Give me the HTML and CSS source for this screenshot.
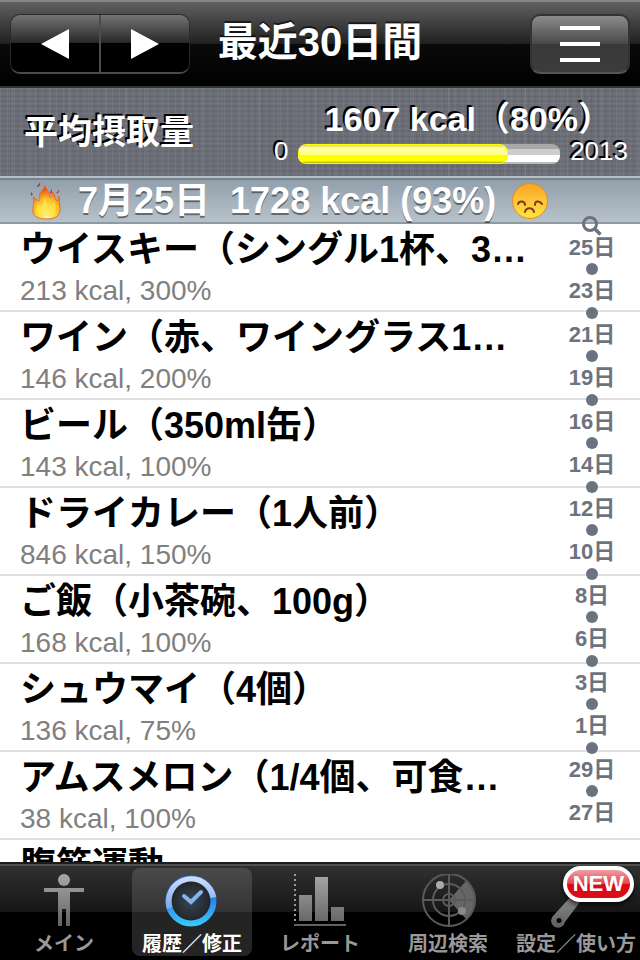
FILE: index.html
```html
<!DOCTYPE html>
<html lang="ja">
<head>
    <meta charset="UTF-8">
    <meta name="viewport" content="width=device-width, initial-scale=1.0">
    <title>最近30日間</title>
    <link rel="stylesheet" href="styles.css">
</head>
<body>
    <header class="top-bar">
        <div class="pager">
            <button class="pager-btn" type="button" aria-label="前へ">
                <svg width="28" height="30" viewBox="0 0 28 30"><path d="M28 0V30L0 15Z" fill="#fff"/></svg>
            </button>
            <button class="pager-btn" type="button" aria-label="次へ">
                <svg width="28" height="30" viewBox="0 0 28 30"><path d="M0 0V30L28 15Z" fill="#fff"/></svg>
            </button>
        </div>
        <h1 class="title">最近30日間</h1>
        <button class="menu-btn" type="button" aria-label="メニュー">
            <svg width="40" height="36" viewBox="0 0 40 36"><path d="M0 2H40M0 18H40M0 34H40" stroke="#fff" stroke-width="4"/></svg>
        </button>
    </header>

    <section class="summary">
        <h2 class="summary-label">平均摂取量</h2>
        <div class="gauge">
            <div class="gauge-value">1607 kcal（80%）</div>
            <span class="gauge-limit">0</span>
            <div class="gauge-track"><div class="gauge-fill" style="width: 80%"></div></div>
            <span class="gauge-limit">2013</span>
        </div>
    </section>

    <main class="content">
        <div class="day-header">
            <svg class="day-icon" width="36" height="40" viewBox="0 0 36 40">
                <defs>
                    <radialGradient id="flame" cx="50%" cy="88%" r="75%">
                        <stop offset="0" stop-color="#fffbd0"/>
                        <stop offset=".3" stop-color="#ffe64a"/>
                        <stop offset=".68" stop-color="#fcb322"/>
                        <stop offset="1" stop-color="#e2571c"/>
                    </radialGradient>
                </defs>
                <path d="M17 4C18 8 21 10 22 16C23 17 24 15 25 11C28 15 26 18 29 20C30 19 31 17 31 15C32 19 31 22 32 26C33 34 28 38 19 38C9 38 4 35 5 27C5 23 7 22 5 16C8 17 9 20 11 20C13 16 10 13 13 11C14 9 16 8 17 4Z" fill="url(#flame)" stroke="#e8702a"/>
                <path d="M17 16C18 21 20 24 22 25C25 23 25 22 26 20C28 25 29 31 26 35H12C7 31 8 27 10 23C12 25 13 25 14 24C15 22 16 19 17 16Z" fill="#ffe545" opacity=".65"/>
                <path d="M12 1C13 4 11 6 9 6C9 4 11 4 12 1ZM23 8C25 10 24 13 22 13C22 11 23 10 23 8ZM31 8C32 11 30 13 28 12C29 11 31 10 31 8ZM3 11C5 12 5 14 4 15C2 14 3 13 3 11Z" fill="#d22c25"/>
            </svg>
            <h2 class="day-text">7月25日  1728 kcal (93%)</h2>
            <svg class="day-icon" width="40" height="40" viewBox="0 0 40 40">
                <defs>
                    <linearGradient id="face" x1="0" y1="0" x2="0" y2="1">
                        <stop offset="0" stop-color="#fba31f"/>
                        <stop offset=".5" stop-color="#fdc53a"/>
                        <stop offset="1" stop-color="#ffe63c"/>
                    </linearGradient>
                </defs>
                <circle cx="20" cy="20" r="17.5" fill="url(#face)" stroke="#e68a25"/>
                <path d="M8 23Q9 20 12 20.500T15 24M25 24Q25 20 28 20.500T32 23M15 31C16 26 23 26 24 31" fill="none" stroke="#7d3d17" stroke-width="2" stroke-linecap="round"/>
            </svg>
        </div>

        <ul class="food-list">
            <li class="food-item">
                <div class="food-name">ウイスキー（シングル1杯、3…</div>
                <div class="food-detail">213 kcal, 300%</div>
            </li>
            <li class="food-item">
                <div class="food-name">ワイン（赤、ワイングラス1…</div>
                <div class="food-detail">146 kcal, 200%</div>
            </li>
            <li class="food-item">
                <div class="food-name">ビール（350ml缶）</div>
                <div class="food-detail">143 kcal, 100%</div>
            </li>
            <li class="food-item">
                <div class="food-name">ドライカレー（1人前）</div>
                <div class="food-detail">846 kcal, 150%</div>
            </li>
            <li class="food-item">
                <div class="food-name">ご飯（小茶碗、100g）</div>
                <div class="food-detail">168 kcal, 100%</div>
            </li>
            <li class="food-item">
                <div class="food-name">シュウマイ（4個）</div>
                <div class="food-detail">136 kcal, 75%</div>
            </li>
            <li class="food-item">
                <div class="food-name">アムスメロン（1/4個、可食…</div>
                <div class="food-detail">38 kcal, 100%</div>
            </li>
            <li class="food-item">
                <div class="food-name">腹筋運動</div>
            </li>
        </ul>

        <!-- 日付インデックス -->
        <nav class="day-index">
            <a class="index-link" href="#" aria-label="検索">
                <svg width="20" height="20" viewBox="0 0 20 20" fill="none" stroke="#6b737f">
                    <circle cx="8" cy="8" r="6.5" stroke-width="3"/>
                    <path d="M12.5 12.5L18.5 18.5" stroke-width="3.5"/>
                </svg>
            </a>
            <a class="index-link" href="#">25日</a>
            <span class="index-dot"></span>
            <a class="index-link" href="#">23日</a>
            <span class="index-dot"></span>
            <a class="index-link" href="#">21日</a>
            <span class="index-dot"></span>
            <a class="index-link" href="#">19日</a>
            <span class="index-dot"></span>
            <a class="index-link" href="#">16日</a>
            <span class="index-dot"></span>
            <a class="index-link" href="#">14日</a>
            <span class="index-dot"></span>
            <a class="index-link" href="#">12日</a>
            <span class="index-dot"></span>
            <a class="index-link" href="#">10日</a>
            <span class="index-dot"></span>
            <a class="index-link" href="#">8日</a>
            <span class="index-dot"></span>
            <a class="index-link" href="#">6日</a>
            <span class="index-dot"></span>
            <a class="index-link" href="#">3日</a>
            <span class="index-dot"></span>
            <a class="index-link" href="#">1日</a>
            <span class="index-dot"></span>
            <a class="index-link" href="#">29日</a>
            <span class="index-dot"></span>
            <a class="index-link" href="#">27日</a>
        </nav>
    </main>

    <nav class="tab-bar">
        <a class="tab" href="#">
            <svg class="tab-icon" width="56" height="56" viewBox="0 0 56 56">
                <defs>
                    <linearGradient id="gray" gradientUnits="userSpaceOnUse" x1="0" y1="0" x2="0" y2="56">
                        <stop offset="0" stop-color="#a8a8a8"/>
                        <stop offset="1" stop-color="#5c5c5c"/>
                    </linearGradient>
                </defs>
                <g fill="url(#gray)">
                    <circle cx="28" cy="6" r="6"/>
                    <path d="M8 14H48V18H34V52H30V35H26V52H22V18H8Z"/>
                </g>
            </svg>
            <span class="tab-label">メイン</span>
        </a>
        <a class="tab active" href="#">
            <svg class="tab-icon" width="56" height="56" viewBox="0 0 56 56">
                <defs>
                    <linearGradient id="ringTop" x1="0" y1="0" x2="0" y2="1">
                        <stop offset="0" stop-color="#d4dff8"/>
                        <stop offset="1" stop-color="#78a7ec"/>
                    </linearGradient>
                    <linearGradient id="ringBottom" gradientUnits="userSpaceOnUse" x1="0" y1="22" x2="0" y2="52">
                        <stop offset="0" stop-color="#267bea"/>
                        <stop offset="1" stop-color="#3bc9fd"/>
                    </linearGradient>
                    <radialGradient id="dial">
                        <stop offset="0" stop-color="#354657"/>
                        <stop offset="1" stop-color="#242526"/>
                    </radialGradient>
                </defs>
                <circle cx="27" cy="27" r="20" fill="url(#dial)"/>
                <circle cx="27" cy="27" r="22.5" fill="none" stroke="url(#ringBottom)" stroke-width="6"/>
                <path d="M2.8 35A25.5 25.5 0 1 1 52.3 23L46.3 24A19.5 19.5 0 1 0 8.5 33Z" fill="url(#ringTop)"/>
                <path d="M20 22L27 28L37 18" fill="none" stroke="#86b5ee" stroke-width="4" stroke-linecap="round"/>
            </svg>
            <span class="tab-label">履歴／修正</span>
        </a>
        <a class="tab" href="#">
            <svg class="tab-icon" width="56" height="56" viewBox="0 0 56 56">
                <g fill="url(#gray)">
                    <path d="M7 21H20V47H7ZM23 3H36V47H23ZM39 33H52V47H39ZM2 50H54V52H2Z"/>
                </g>
                <path d="M3 0V48" stroke="#999" stroke-width="2" stroke-dasharray="2 3"/>
            </svg>
            <span class="tab-label">レポート</span>
        </a>
        <a class="tab" href="#">
            <svg class="tab-icon" width="56" height="56" viewBox="0 0 56 56">
                <path d="M29 26L46 7A26 26 0 0 1 46 45Z" fill="#666"/>
                <g fill="none" stroke="#5a5a5a" stroke-width="2">
                    <circle cx="29" cy="26" r="26"/>
                    <circle cx="29" cy="26" r="16"/>
                    <circle cx="29" cy="26" r="6"/>
                    <path d="M29 0V52M3 26H55"/>
                </g>
                <circle cx="20" cy="11" r="4" fill="#aaa"/>
                <circle cx="42" cy="37" r="4" fill="#888"/>
            </svg>
            <span class="tab-label">周辺検索</span>
        </a>
        <a class="tab" href="#">
            <svg class="tab-icon" width="56" height="56" viewBox="0 0 56 56">
                <path fill-rule="evenodd" d="M5 42L26 19L38 20L17 48A7 7 0 1 1 5 42ZM11 44A2.500 2.500 0 1 0 11 49A2.500 2.500 0 1 0 11 44Z" fill="url(#gray)"/>
            </svg>
            <span class="tab-label">設定／使い方</span>
            <span class="badge">NEW</span>
        </a>
    </nav>
</body>
</html>
```
FILE: styles.css
```css
* {
    box-sizing: border-box;
}

body {
    display: flex;
    flex-direction: column;
    margin: 0;
    height: 100vh;
    overflow: hidden;
    background-color: #fff;
    font-family: "Liberation Sans", "Noto Sans CJK JP", sans-serif;
}

h1, h2, ul {
    margin: 0;
    padding: 0;
}

button {
    padding: 0;
    border: none;
    cursor: pointer;
}

a {
    text-decoration: none;
}

/* ナビゲーションバー */
.top-bar {
    display: grid;
    grid-template-columns: 1fr auto 1fr;
    align-items: start;
    height: 88px;
    flex-shrink: 0;
    padding: 12px 10px 0;
    border-top: 2px solid #858585;
    border-bottom: 2px solid #333;
    background: linear-gradient(#606060 0, #202020 42px, #0a0a0a 42px, #000 100%);
}

.pager {
    display: flex;
    width: 180px;
    height: 60px;
    border: 1px solid #2a2a2a;
    border-bottom: 2px solid #4a4a4a;
    border-radius: 10px;
    overflow: hidden;
}

.pager-btn {
    flex: 1;
    display: flex;
    align-items: center;
    justify-content: center;
    background: linear-gradient(#747474, #262626 50%, #000 50%, #000);
}

.pager-btn + .pager-btn {
    border-left: 2px solid #4c4c4c;
}

.title {
    font-size: 40px;
    line-height: 56px;
    font-weight: bold;
    color: #fff;
    text-shadow: 0 -2px 0 rgba(0, 0, 0, 0.6);
}

.menu-btn {
    display: flex;
    align-items: center;
    justify-content: center;
    justify-self: end;
    width: 100px;
    height: 60px;
    border: 2px solid #333;
    border-bottom-color: #555;
    border-radius: 10px;
    background: linear-gradient(#8c8c8c, #484848 50%, #393939 50%, #3c3c3c);
}

/* 平均摂取量 */
.summary {
    display: flex;
    align-items: center;
    justify-content: space-between;
    flex-shrink: 0;
    padding: 12px 12px 12px 24px;
    color: #fff;
    text-shadow: -2px -2px 0 #000;
    background:
        repeating-linear-gradient(90deg, rgba(255, 255, 255, 0.05) 0 1px, transparent 1px 3px, rgba(0, 0, 0, 0.05) 3px 4px, transparent 4px 7px),
        repeating-linear-gradient(90deg, transparent 0 11px, rgba(255, 255, 255, 0.04) 11px 13px, transparent 13px 19px),
        repeating-linear-gradient(rgba(255, 255, 255, 0.05) 0 1px, transparent 1px 3px, rgba(0, 0, 0, 0.05) 3px 4px, transparent 4px 5px),
        #6b6d76;
}

.summary-label {
    font-size: 34px;
    line-height: 38px;
    font-weight: bold;
}

.gauge {
    display: grid;
    grid-template-columns: auto 1fr auto;
    column-gap: 10px;
    align-items: end;
    width: 60%;
    max-width: 354px;
}

.gauge-value {
    grid-column: 1 / -1;
    padding-right: 16px;
    text-align: right;
    white-space: nowrap;
    font-size: 34px;
    line-height: 38px;
    font-weight: bold;
}

.gauge-limit {
    font-size: 26px;
    line-height: 26px;
}

.gauge-track {
    height: 20px;
    border-radius: 8px;
    overflow: hidden;
    background: linear-gradient(#a8a8a8 0 5px, #cdcdcd 5px 11px, #fff 11px 18px, #bbb 18px);
}

.gauge-fill {
    height: 100%;
    border: 1px solid #ff0;
    border-radius: 8px;
    background: linear-gradient(#d8d850 0, #ffffa8 3px, #ffff80 10px, #ff0 10px, #ff0 16px, #a8a800 18px);
}

/* 日付ヘッダー */
.content {
    position: relative;
    flex: 1;
    min-height: 0;
    overflow: hidden;
}

.day-header {
    display: flex;
    align-items: center;
    gap: 14px;
    height: 48px;
    padding: 2px 28px 0;
    border-top: 2px solid #b4bfc8;
    border-bottom: 2px solid #8d99a3;
    background: linear-gradient(#76828c 0 2px, #92a0ac 2px, #b7c1ca 100%);
}

.day-icon {
    flex-shrink: 0;
}

.day-text {
    white-space: pre;
    font-size: 36px;
    line-height: 44px;
    font-weight: bold;
    color: #fff;
    text-shadow: 0 2px 0 rgba(0, 0, 0, 0.45);
}

/* 食事リスト */
.food-list {
    list-style: none;
}

.food-item {
    height: 88px;
    padding: 4px 90px 0 20px;
    border-bottom: 2px solid #e0e0e0;
}

.food-name {
    overflow: hidden;
    text-overflow: ellipsis;
    white-space: nowrap;
    font-size: 36px;
    line-height: 44px;
    font-weight: bold;
    color: #000;
}

.food-detail {
    font-size: 28px;
    line-height: 38px;
    color: #808080;
}

.day-index {
    position: absolute;
    top: 39px;
    right: 16px;
    bottom: 38px;
    width: 64px;
    display: grid;
    grid-auto-rows: 1fr;
    place-items: center;
}

.index-link {
    display: block;
    height: 20px;
    font-size: 22px;
    line-height: 20px;
    font-weight: bold;
    color: #6b737f;
}

.index-dot {
    width: 12px;
    height: 12px;
    border-radius: 50%;
    background-color: #6b737f;
}

/* タブバー */
.tab-bar {
    display: flex;
    flex-shrink: 0;
    height: 98px;
    border-top: 2px solid #1c1c1c;
    background: linear-gradient(#505050 0 2px, #303030 2px, #161616 48px, #000 48px);
}

.tab {
    position: relative;
    flex: 1;
    display: flex;
    flex-direction: column;
    align-items: center;
    margin: 4px;
    padding-top: 6px;
    border-radius: 8px;
    color: #999;
}

.tab.active {
    color: #fff;
    background: linear-gradient(#4a4a4a, #343434 44px, #242424 44px);
}

.tab-icon {
    flex-shrink: 0;
}

.tab-label {
    white-space: nowrap;
    font-size: 20px;
    line-height: 28px;
    font-weight: bold;
}

.badge {
    position: absolute;
    top: -2px;
    right: 2px;
    padding: 0 6px;
    border: 4px solid #fff;
    border-radius: 18px;
    font-size: 22px;
    line-height: 28px;
    font-weight: bold;
    color: #fff;
    background: linear-gradient(#f0a0a4, #e0434c 50%, #d80a16 50%, #dc0c18);
    box-shadow: 0 3px 5px rgba(0, 0, 0, 0.7);
}
```
